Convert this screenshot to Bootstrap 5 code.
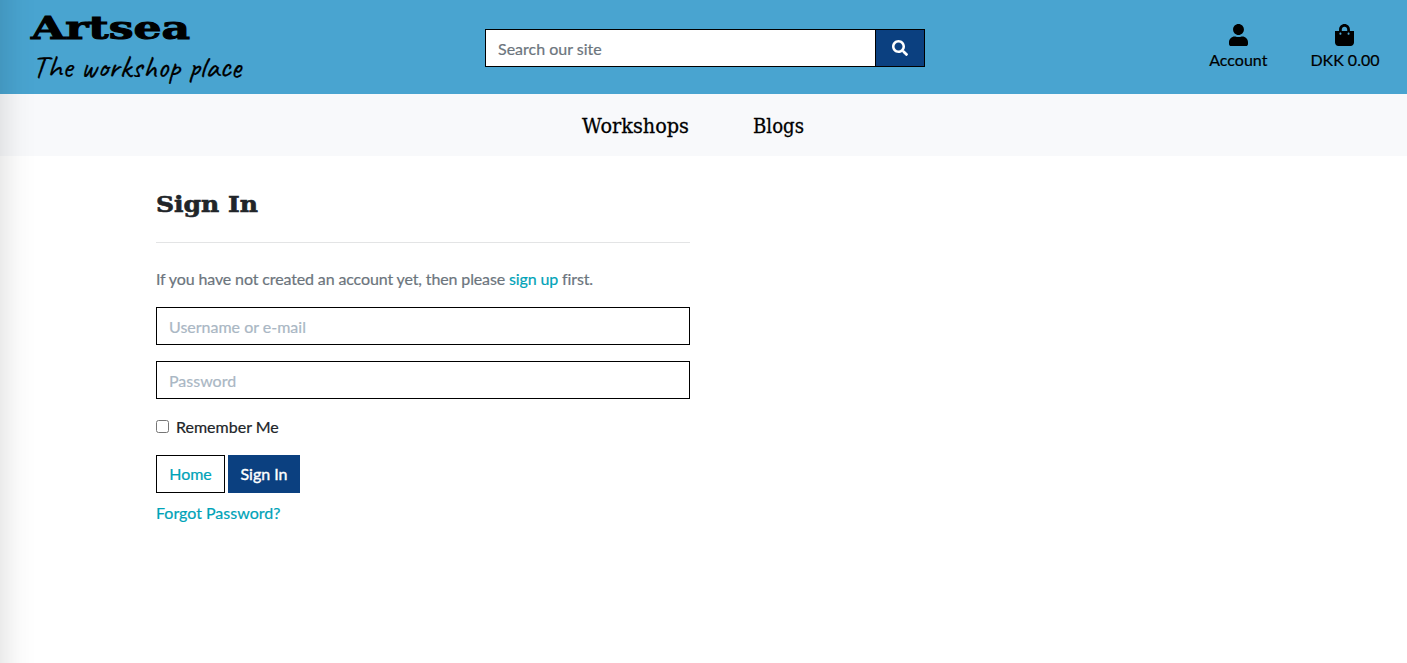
<!DOCTYPE html>
<html lang="en">
<head>
<meta charset="utf-8">
<meta name="viewport" content="width=device-width, initial-scale=1">
<title>Artsea - Sign In</title>
<link href="https://cdn.jsdelivr.net/npm/bootstrap@5.3.0/dist/css/bootstrap.min.css" rel="stylesheet">
<style>
body{font-family:Lato,sans-serif;font-size:16px;color:#212529;min-height:100vh;overflow:hidden;-webkit-text-stroke:.2px}
a{color:#00a3b8;text-decoration:none}
svg{display:block;overflow:visible;-webkit-text-stroke:0}
.site-header{height:94px;background:#49a4d0}
.side{width:485px}
.wordmark{font:bold 32px "DejaVu Serif",serif;stroke:#000;stroke-width:1}
.tagline{font:normal 31px Caveat,"Comic Neue",cursive;stroke:#000;stroke-width:.2}
.search-box{width:440px;height:38px;margin-top:29px}
.form-control{border:1px solid #000;border-radius:0;height:38px;padding:6px 12px}
.search-box .form-control{padding:7px 12px 7px}
.search-box .form-control::placeholder{color:#6c757d}
.login .form-control::placeholder{color:#aab7c4}
.btn{border-radius:0;height:38px;padding:6px 12px}
.btn-navy,.btn-navy:hover{background:#0b4080;color:#fff;border-color:#0b4080}
.search-box .btn{width:49px;border-color:#000;padding:0 16px}
.tools{padding-right:27.500px;gap:43px;padding-top:24px;height:94px}
.tools a{color:#000;line-height:24px}
.tools span{margin-top:2px}
.main-links{height:62px;background:#f8f9fb}
.main-links svg{font:20px "Roboto Slab","DejaVu Serif",serif;stroke:#000;stroke-width:.3}
.login{width:534px;margin-left:156px;padding-top:36px}
.page-title{font:bold 22px "DejaVu Serif",serif;fill:#212529;stroke:#212529;stroke-width:.6}
.rule{height:1px;background:#e3e4e5;margin:25px 0 24px}
.intro{letter-spacing:-.13px}
.form-check-input{width:13px;height:13px;border:1px solid #767676;border-radius:2.5px!important}
.login .form-check-input{margin-bottom:2px!important}
.remember-label{margin-left:7px}
.btn-home{border-color:#000;color:#00a3b8;width:69px}
.login .btn-navy{width:72px;margin-left:3px;padding:6px 0;-webkit-text-stroke:.4px}
.edge{width:38px;height:100vh;background:linear-gradient(90deg,rgba(0,0,0,.08),rgba(0,0,0,.046) 25%,rgba(0,0,0,.014) 55%,rgba(0,0,0,.004) 80%,transparent);pointer-events:none}
</style>
</head>
<body>
<header class="site-header d-flex">
  <a href="#" class="side text-black flex-shrink-0" aria-label="Artsea home">
    <svg width="300" height="94">
      <text class="wordmark" x="31" y="39" textLength="159" lengthAdjust="spacingAndGlyphs">Artsea</text>
      <text class="tagline" x="32" y="77" textLength="209" lengthAdjust="spacingAndGlyphs">The workshop place</text>
    </svg>
  </a>
  <form class="search-box d-flex flex-shrink-0">
    <input class="form-control" type="search" placeholder="Search our site" aria-label="Search our site">
    <button class="btn btn-navy border-start-0 flex-shrink-0" type="button" aria-label="Search">
      <svg width="16" height="16" viewBox="0 0 512 512" fill="currentColor"><path d="M505 442.700 405.300 343c-4.500-4.500-10.600-7-17-7H372c27.600-35.300 44-79.700 44-128C416 93.100 322.900 0 208 0S0 93.100 0 208s93.100 208 208 208c48.300 0 92.700-16.400 128-44v16.300c0 6.400 2.500 12.500 7 17l99.700 99.700c9.400 9.400 24.600 9.400 33.900 0l28.300-28.300c9.400-9.400 9.400-24.600.1-34zM208 336c-70.700 0-128-57.200-128-128 0-70.700 57.200-128 128-128 70.700 0 128 57.200 128 128 0 70.700-57.200 128-128 128z"/></svg>
    </button>
  </form>
  <nav class="tools d-flex ms-auto text-center">
    <a href="#"><svg class="mx-auto" width="19" height="22" viewBox="0 0 448 512" preserveAspectRatio="none"><path d="M224 256c70.700 0 128-57.300 128-128S294.700 0 224 0 96 57.300 96 128s57.300 128 128 128zm89.600 32h-16.700c-22.200 10.200-46.900 16-72.900 16s-50.600-5.800-72.900-16h-16.700C60.200 288 0 348.200 0 422.400V464c0 26.500 21.500 48 48 48h352c26.500 0 48-21.500 48-48v-41.600c0-74.200-60.200-134.400-134.400-134.400z"/></svg><span class="d-block">Account</span></a>
    <a href="#"><svg class="mx-auto" width="19" height="22" viewBox="0 0 448 512" preserveAspectRatio="none"><path d="M352 160v-32C352 57.420 294.579 0 224 0 153.420 0 96 57.420 96 128v32H0v272c0 44.183 35.817 80 80 80h288c44.183 0 80-35.817 80-80V160h-96zm-192-32c0-35.290 28.710-64 64-64s64 28.710 64 64v32H160v-32zm160 120c-13.255 0-24-10.745-24-24s10.745-24 24-24 24 10.745 24 24-10.745 24-24 24zm-192 0c-13.255 0-24-10.745-24-24s10.745-24 24-24 24 10.745 24 24-10.745 24-24 24z"/></svg><span class="d-block">DKK 0.00</span></a>
  </nav>
</header>
<nav class="main-links d-flex">
  <svg width="1407" height="62">
    <a href="#"><text x="582" y="39" textLength="107" lengthAdjust="spacingAndGlyphs">Workshops</text></a>
    <a href="#"><text x="753" y="39" textLength="51" lengthAdjust="spacingAndGlyphs">Blogs</text></a>
  </svg>
</nav>
<main class="login">
  <h1 class="m-0"><svg width="534" height="25"><text class="page-title" x="0" y="20" textLength="102" lengthAdjust="spacingAndGlyphs">Sign In</text></svg></h1>
  <div class="rule"></div>
  <p class="intro text-secondary mb-3">If you have not created an account yet, then please <a href="#">sign up</a> first.</p>
  <form>
    <input class="form-control mb-3" type="text" placeholder="Username or e-mail" aria-label="Username or e-mail">
    <input class="form-control mb-3" type="password" placeholder="Password" aria-label="Password">
    <div class="d-flex align-items-center mb-3">
      <input class="form-check-input m-0" type="checkbox" id="remember">
      <label for="remember" class="remember-label">Remember Me</label>
    </div>
    <div class="d-flex mb-2">
      <a class="btn btn-home" href="#">Home</a>
      <button class="btn btn-navy" type="button">Sign In</button>
    </div>
    <a href="#">Forgot Password?</a>
  </form>
</main>
<div class="edge position-fixed top-0 start-0"></div>
<script src="https://cdn.jsdelivr.net/npm/bootstrap@5.3.0/dist/js/bootstrap.bundle.min.js"></script>
</body>
</html>
